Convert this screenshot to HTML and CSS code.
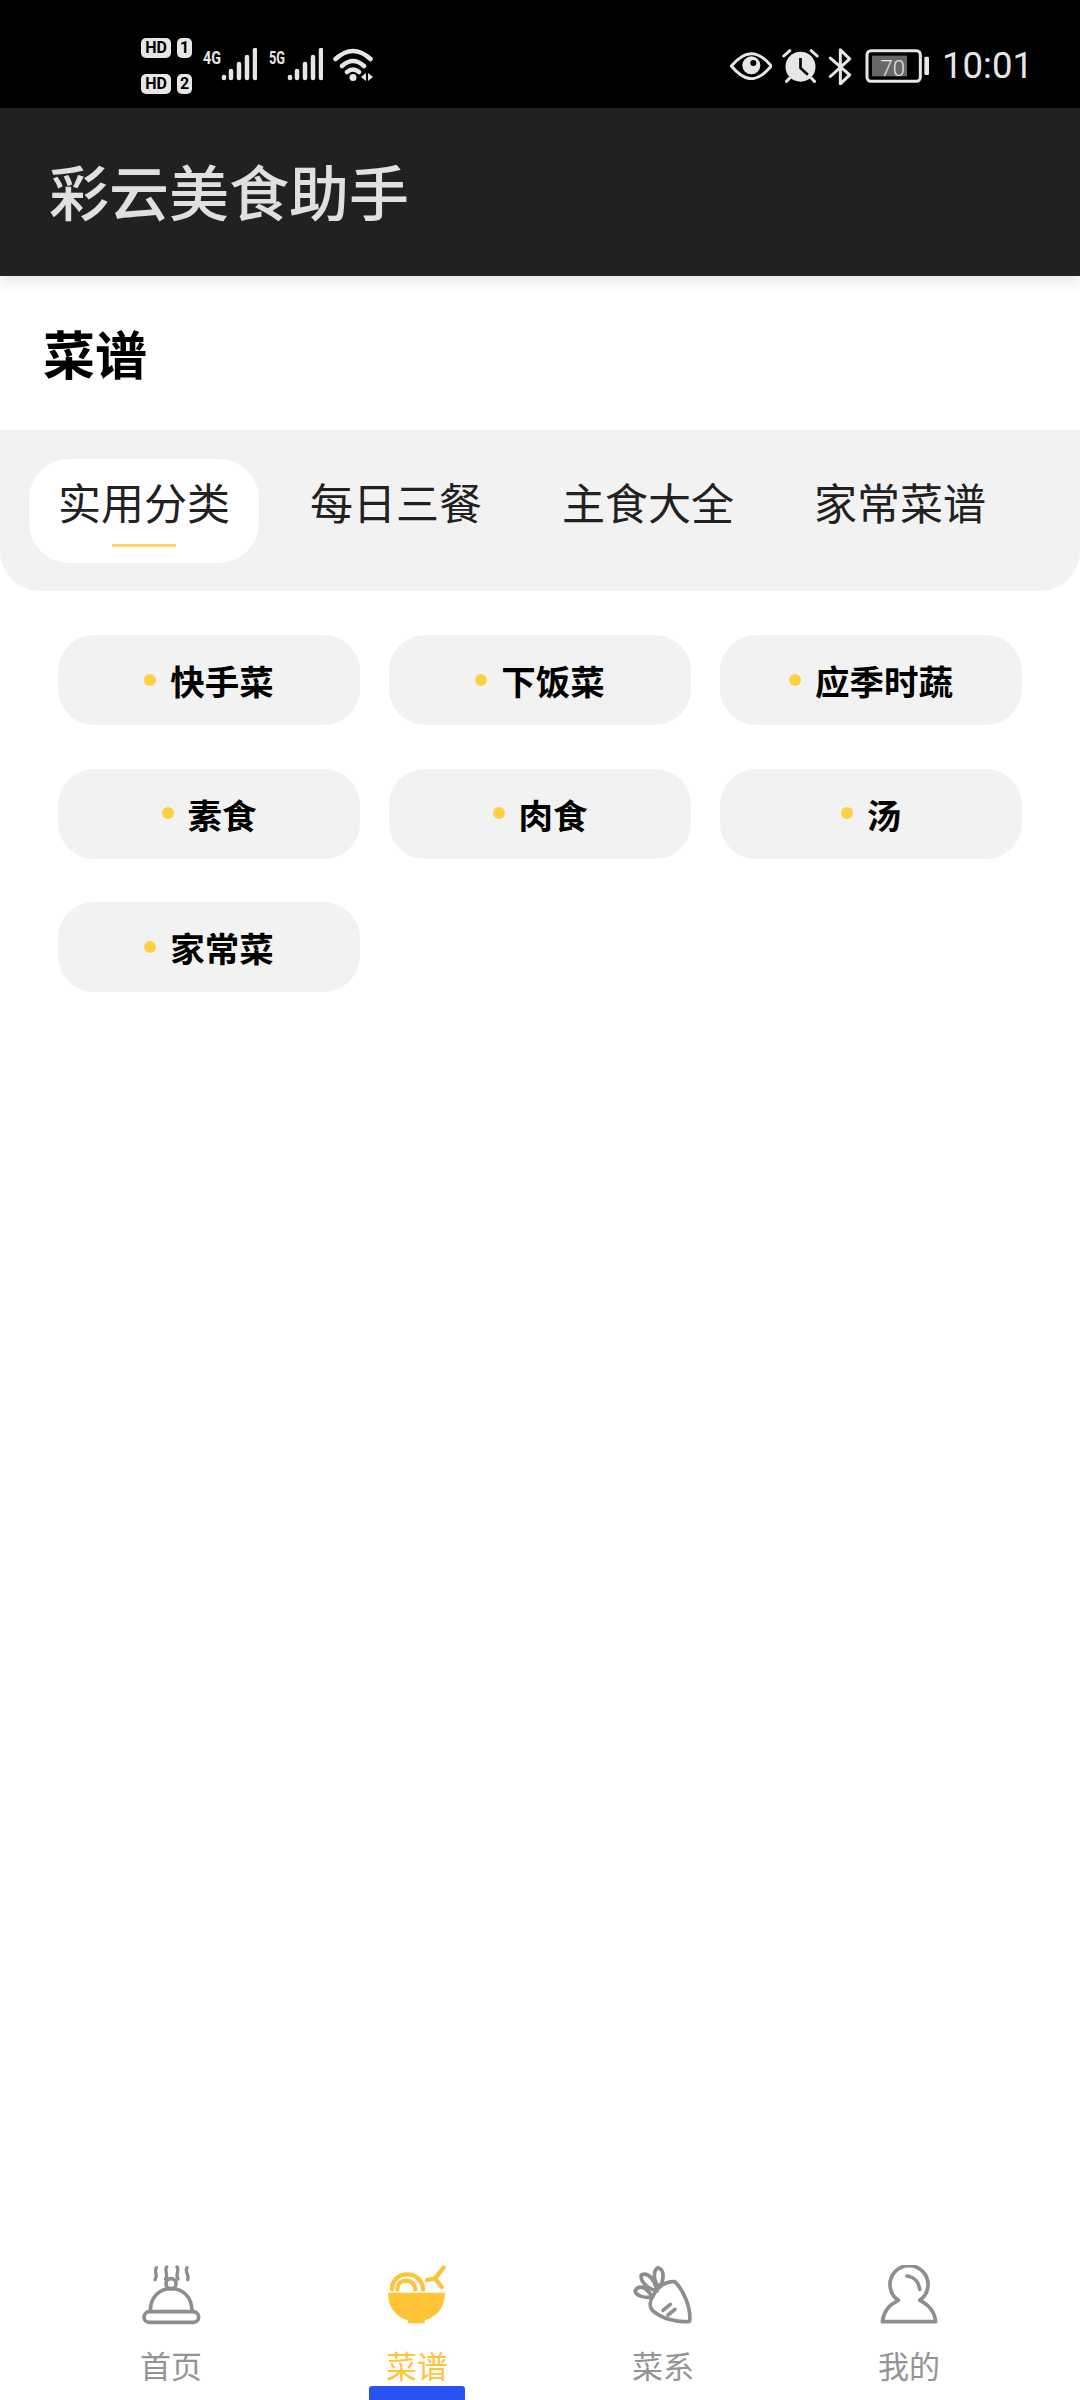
FILE: index.html
```html
<!DOCTYPE html>
<html lang="zh-CN">
<head>
<meta charset="utf-8">
<title>彩云美食助手</title>
<link rel="stylesheet" href="styles.css">
</head>
<body>
<div class="screen">
  <header class="status">
    <div class="status-left">
      <div class="sims">
        <div class="sim"><span class="hd">HD</span><span class="num">1</span></div>
        <div class="sim"><span class="hd">HD</span><span class="num">2</span></div>
      </div>
      <svg class="sig" viewBox="0 0 54 36"><text class="sig-t" x="0" y="16" textLength="18" lengthAdjust="spacingAndGlyphs">4G</text><g class="bars"><path d="M21 29v1M28 23v7M36 16v14M44 9v21M52 2v28"/></g></svg>
      <svg class="sig" viewBox="0 0 54 36"><text class="sig-t" x="0" y="16" textLength="16" lengthAdjust="spacingAndGlyphs">5G</text><g class="bars"><path d="M21 29v1M28 23v7M36 16v14M44 9v21M52 2v28"/></g></svg>
      <svg class="wifi" viewBox="0 0 42 36"><g class="wifi-l"><path d="M2.5 11Q20-5 37.500 11M9 18Q20 8 31 18M14 24Q20 19 26 24"/></g><circle class="fg" cx="20" cy="29.500" r="3.500"/><path class="fg" d="M33 25v8l-5-4zM35 25v8l5-4z"/></svg>
    </div>
    <div class="status-right">
      <svg class="eye" viewBox="56 63 126 84"><path class="ln" d="M60 105C85 75 105 68 120 68C135 68 155 75 180 105C155 135 135 143 120 143C105 143 85 135 60 105Z"/><circle class="fg" cx="120" cy="103" r="27"/><circle cx="126" cy="96" r="9" fill="#000"/></svg>
      <svg class="alarm" viewBox="215 55 110 105"><circle class="fg" cx="270" cy="108" r="45"/><path class="dk" d="M270 82V112L292 132"/><path class="ln" d="M220 76L238 60M302 60L320 76M228 152L238 142M312 152L302 142"/></svg>
      <svg class="bt" viewBox="355 50 72 110"><path class="ln" d="M362 80L420 130L392 157V55L420 82L362 135"/></svg>
      <svg class="batt" viewBox="462 55 195 105"><rect class="ln" x="468" y="60" width="160" height="92" rx="12"/><rect x="483" y="75" width="105" height="62" fill="#666"/><text class="batt-t" x="545" y="135" text-anchor="middle">70</text><rect class="fg" x="640" y="78" width="14" height="55" rx="4"/></svg>
      <span class="time">10:01</span>
    </div>
  </header>
  <div class="appbar">彩云美食助手</div>
  <h1 class="section">菜谱</h1>
  <nav class="tabs">
    <div class="tab active">实用分类</div>
    <div class="tab">每日三餐</div>
    <div class="tab">主食大全</div>
    <div class="tab">家常菜谱</div>
  </nav>
  <main class="chips">
    <div class="chip">快手菜</div>
    <div class="chip">下饭菜</div>
    <div class="chip">应季时蔬</div>
    <div class="chip">素食</div>
    <div class="chip">肉食</div>
    <div class="chip">汤</div>
    <div class="chip">家常菜</div>
  </main>
  <footer class="nav">
    <div class="nav-item">
      <svg class="nav-ic" viewBox="122 72 180 180"><path d="M168 80C160 92 174 102 164 116M199 78C191 90 205 100 196 114M230 78C238 90 224 100 233 114M260 80C252 92 268 102 262 116" class="thin"/><circle class="st" cx="212" cy="128" r="15"/><path class="st" d="M150 210C150 165 180 143 212 143C245 143 275 165 275 210"/><rect class="st" x="131" y="212" width="164" height="32" rx="16"/></svg>
      <span class="nav-l">首页</span>
    </div>
    <div class="nav-item on">
      <svg class="nav-ic" viewBox="862 72 180 180"><path class="fill-y" d="M865 155H1036C1036 200 1010 228 975 238V247H925V238C890 228 865 200 865 155Z"/><path class="y-l" d="M877 145C877 85 967 85 970 145M893 145C893 110 945 110 947 145"/><path class="y-l" d="M1032 80L1006 112M982 117L1006 112L1026 138"/></svg>
      <span class="nav-l">菜谱</span>
      <span class="bar"></span>
    </div>
    <div class="nav-item">
      <svg class="nav-ic" viewBox="100 72 180 180"><path class="st" d="M160 165C175 135 200 120 225 122C250 145 275 200 270 241C235 245 190 235 160 210C148 198 150 180 160 165Z"/><path class="st" d="M175 80C197 85 192 120 180 138C160 125 160 88 175 80ZM125 102C145 92 165 115 172 150C150 145 120 125 125 102ZM106 150C115 130 140 135 158 168C135 172 110 165 106 150Z"/><path class="st" d="M190 208L212 190M205 222L226 205"/></svg>
      <span class="nav-l">菜系</span>
    </div>
    <div class="nav-item">
      <svg class="nav-ic" viewBox="838 72 180 180"><path class="st" d="M896 178A57 57 0 1 1 960 178C985 190 1005 210 1008 242H848C852 210 870 190 896 178Z"/><path class="st" d="M922 105C945 108 958 125 960 145"/></svg>
      <span class="nav-l">我的</span>
    </div>
  </footer>
</div>
</body>
</html>
```
FILE: styles.css
```css
* { box-sizing: border-box; }
html, body { margin: 0; padding: 0; background: #fff; }
body { font-family: "Noto Sans CJK SC", "Noto Sans", sans-serif; }
.screen { width: 1080px; height: 2400px; display: flex; flex-direction: column; overflow: hidden; }

.status { height: 108px; flex: none; background: #000; padding: 24px 47px 0 141px; display: flex; justify-content: space-between; align-items: center; color: #e6e6e6; }
.status-left { display: flex; align-items: center; }
.sims { display: flex; flex-direction: column; gap: 16px; width: 62px; }
.sim { display: flex; gap: 6px; height: 20px; }
.hd, .num { background: #e6e6e6; color: #000; border-radius: 5px; font: 700 16px/20px Roboto, sans-serif; text-align: center; }
.hd { width: 30px; }
.num { width: 15px; }
.sig { width: 54px; height: 36px; margin-right: 12px; }
.sig-t { font: 700 19px Roboto, sans-serif; fill: #e6e6e6; }
.bars path { fill: none; stroke: #e6e6e6; stroke-width: 4.5; stroke-linecap: round; }
.wifi { width: 42px; height: 36px; margin-left: -2px; }
.wifi-l path { fill: none; stroke: #e6e6e6; stroke-width: 4.5; stroke-linecap: round; }
.fg { fill: #e6e6e6; }
.ln { fill: none; stroke: #e6e6e6; stroke-width: 9; stroke-linecap: round; stroke-linejoin: round; }
.dk { fill: none; stroke: #000; stroke-width: 8; }
.status-right { display: flex; align-items: center; }
.eye { width: 42px; height: 28px; margin-right: 10px; }
.alarm { width: 37px; height: 35px; margin-right: 9px; }
.bt { width: 24px; height: 37px; margin-right: 13px; }
.batt { width: 65px; height: 35px; margin-right: 12px; }
.batt-t { font: 300 66px Roboto, sans-serif; fill: #e6e6e6; }
.time { font: 400 36.500px/40px Roboto, sans-serif; color: #e6e6e6; }

.appbar { height: 168px; flex: none; background: #212121; color: #e0e0e0; padding-left: 49px; font-size: 60px; font-weight: 500; line-height: 164px; position: relative; box-shadow: 0 6px 14px rgba(0,0,0,.1); }
.section { margin: 0; height: 154px; flex: none; padding-left: 43px; font-size: 52px; font-weight: 700; line-height: 154px; color: #000; }
.tabs { height: 161px; flex: none; background: #f2f2f2; border-radius: 0 0 40px 40px; padding: 29px 0 0 29px; display: flex; gap: 22px; align-items: flex-start; }
.tab { width: 230px; height: 104px; font-size: 43px; line-height: 84px; text-align: center; color: #212121; white-space: nowrap; }
.tab.active { background: #fff; border-radius: 40px; position: relative; }
.tab.active::after { content: ""; position: absolute; left: 83px; width: 64px; top: 85px; height: 3px; background: #ffd75e; }

.chips { flex: 1; padding: 44px 58px 0; display: grid; grid-template-columns: repeat(3, 302px); grid-auto-rows: 90px; gap: 43.500px 29px; align-content: start; }
.chip { background: #f2f2f2; border-radius: 36px; display: flex; align-items: center; justify-content: center; gap: 14px; font-size: 34.500px; font-weight: 700; line-height: 88px; color: #000; }
.chip::before { content: ""; width: 12px; height: 12px; border-radius: 50%; background: #ffd045; margin-top: -1px; }

.nav { height: 150px; flex: none; padding: 0 48px; display: grid; grid-template-columns: repeat(4, 246px); }
.nav-item { display: flex; flex-direction: column; align-items: center; color: #949494; position: relative; }
.nav-item.on { color: #ffc338; }
.nav-ic { width: 60px; height: 60px; margin-top: 15px; }
.st { fill: none; stroke: #8e8e8e; stroke-width: 11; stroke-linecap: round; stroke-linejoin: round; }
.thin { fill: none; stroke: #8e8e8e; stroke-width: 10; stroke-linecap: round; }
.fill-y { fill: #ffc338; }
.y-l { fill: none; stroke: #ffc338; stroke-width: 13; stroke-linecap: round; }
.nav-l { font-size: 31px; line-height: 44px; margin-top: 18px; }
.bar { position: absolute; left: 75px; width: 96px; bottom: 0; height: 14px; background: #2952f3; border-radius: 3px 3px 0 0; }
```
